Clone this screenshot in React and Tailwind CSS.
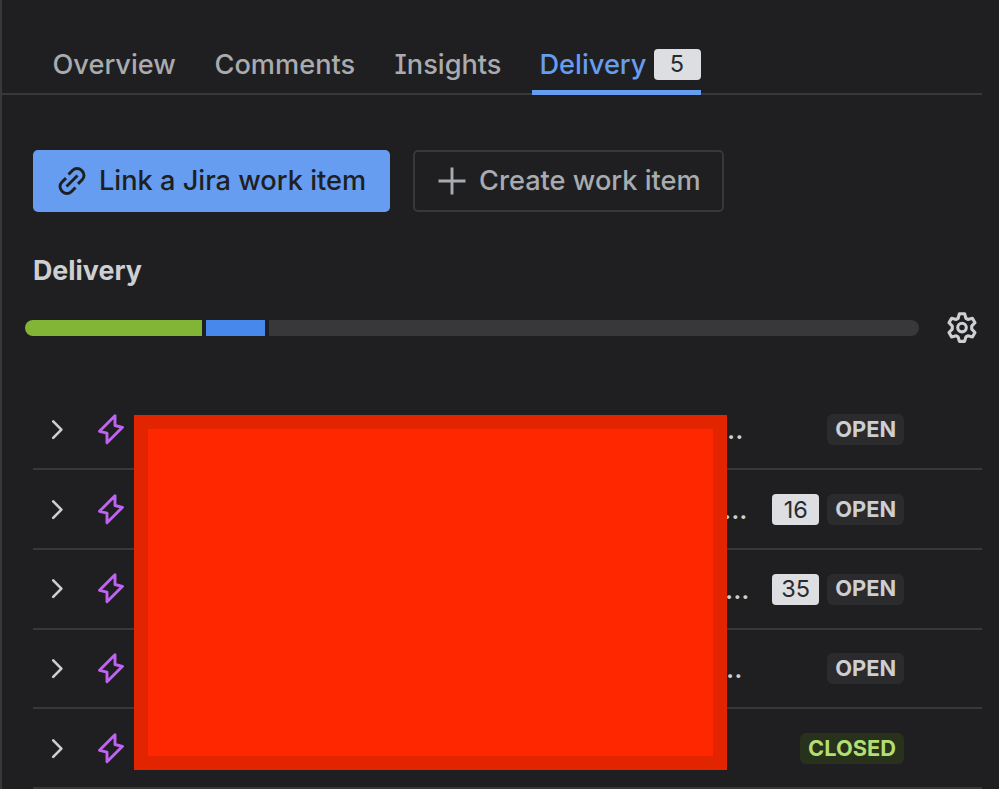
import clsx from "clsx";

const items = [
  { id: 1, dots: "..", dotsPad: "ml-[600px]", status: "OPEN" },
  { id: 2, dots: "...", dotsPad: "ml-[596px]", count: 16, status: "OPEN" },
  { id: 3, dots: "...", dotsPad: "ml-[598px]", count: 35, status: "OPEN" },
  { id: 4, dots: "..", dotsPad: "ml-[599px]", status: "OPEN" },
  { id: 5, dots: "", dotsPad: "ml-[598px]", status: "CLOSED" },
];

function LinkIcon() {
  return (
    <svg className="w-8 h-8 shrink-0" viewBox="0 0 32 32" fill="none" stroke="currentColor" strokeWidth="2.9">
      <path d="M12.5 9.5l4.2-4.2a6.1 6.1 0 0 1 8.7 0l0.8 0.8a6.1 6.1 0 0 1 0 8.6l-4.2 4.2" />
      <path d="M19.5 22.5l-4.2 4.2a6.1 6.1 0 0 1-8.7 0l-0.8-0.8a6.1 6.1 0 0 1 0-8.6l4.2-4.2" />
      <path d="M10.5 21.5L21.5 10.5" />
    </svg>
  );
}

function PlusIcon() {
  return (
    <svg className="w-8 h-8 shrink-0" viewBox="0 0 32 32" fill="none" stroke="currentColor" strokeWidth="2.9">
      <path d="M16 2.5v27M2.5 16h27" />
    </svg>
  );
}

function GearIcon() {
  return (
    <svg className="w-8 h-8 shrink-0" viewBox="0 0 32 32" fill="none" stroke="currentColor" strokeWidth="3.1" strokeLinejoin="round">
      <path d="M13.4 1.8h5.2l1.3 4.5 1.9 1.1 4.6-1.2 2.6 4.5-3.3 3.4v3l3.3 3.4-2.6 4.5-4.6-1.2-1.9 1.1-1.3 4.5h-5.2l-1.3-4.5-1.9-1.1-4.6 1.2-2.6-4.5 3.3-3.4v-3l-3.3-3.4 2.6-4.5 4.6 1.2 1.9-1.1z" />
      <circle cx="16" cy="15.6" r="4.3" />
    </svg>
  );
}

function Chevron() {
  return (
    <svg className="w-4 h-6 shrink-0" viewBox="0 0 16 24" fill="none" stroke="#cecfd2" strokeWidth="2.6" strokeLinecap="round" strokeLinejoin="round">
      <path d="M4.2 3.4l8.2 8.2-8.2 8.2" />
    </svg>
  );
}

function EpicIcon() {
  return (
    <svg className="w-8 h-8 shrink-0" viewBox="0 0 32 32" fill="none" stroke="#bf63f3" strokeWidth="2.9" strokeLinejoin="round">
      <path d="M20 1.8v9.7l7.5 1.8L12 28.8v-9.700L4.5 17.3z" />
    </svg>
  );
}

function Count({ children }) {
  return (
    <span className="w-[47px] h-[31px] rounded-[4px] bg-[#dddee1] text-[#292a2e] text-[23.5px] font-normal flex items-center justify-center">
      {children}
    </span>
  );
}

function Status({ value }) {
  return (
    <span
      className={clsx(
        "h-[31px] px-2 rounded-[6px] text-[21.8px] font-bold flex items-center",
        value === "CLOSED" ? "bg-[#28311b] text-[#b3df72]" : "bg-[#2b2b2d] text-[#cecfd2]"
      )}
    >
      {value}
    </span>
  );
}

export default function App() {
  return (
    <div className="w-[999px] h-[789px] overflow-hidden bg-[#1f1f21] border-l-2 border-[#38383a] pr-[17px] font-['Inter','Liberation_Sans',sans-serif] font-medium text-[27px] leading-none text-[#a9abaf]">
      <div className="h-[95px] pl-[50.5px] pt-[33px] flex border-b-2 border-[#38383a]">
        <div className="h-[62px] flex items-center gap-[39px] text-[27.2px] [font-feature-settings:'cv08']">
          <span className="w-[123px] pt-px">Overview</span>
          <span className="w-[141px] pt-px">Comments</span>
          <span className="w-[99px] pt-px">Insights</span>
          <div className="h-[62px] w-[169px] pl-2 pt-[5px] flex items-center justify-between border-b-[5px] border-[#669df1] text-[#669df1] -ml-px">
            <span className="pt-px">Delivery</span>
            <Count>5</Count>
          </div>
        </div>
      </div>

      <div className="pl-[31px]">
        <div className="pt-[55px] flex gap-[23px] text-[27.2px]">
          <button className="w-[357px] h-[62px] rounded-[5px] bg-[#669df1] text-[#1f1f21] pl-[23px] flex items-center gap-[11px]">
            <LinkIcon />
            <span>Link a Jira work item</span>
          </button>
          <button className="w-[311px] h-[62px] rounded-[5px] border-2 border-[#38383a] pl-[21px] flex items-center gap-[11px]">
            <PlusIcon />
            <span>Create work item</span>
          </button>
        </div>

        <h2 className="mt-[45px] font-bold text-[26.8px] leading-[27px] text-[#cecfd2]">Delivery</h2>

        <div className="mt-[28px] -ml-2 flex items-center">
          <div className="w-[894px] h-4 rounded-full overflow-hidden flex gap-1">
            <div className="w-[177px] bg-[#82b536]" />
            <div className="w-[59px] bg-[#4688ec]" />
            <div className="flex-1 bg-[#38383a]" />
          </div>
          <span className="ml-[27px] text-[#cecfd2]">
            <GearIcon />
          </span>
        </div>

        <div className="relative mt-[46.5px]">
          {items.map((item) => (
            <div key={item.id} className="h-[79.7px] pt-px pl-4 pr-[78px] flex items-center border-b-2 border-[#38383a]">
              <Chevron />
              <span className="ml-[30px]">
                <EpicIcon />
              </span>
              <span className={clsx("text-[#cecfd2]", item.dotsPad)}>{item.dots}</span>
              <div className="ml-auto flex gap-2">
                {item.count && <Count>{item.count}</Count>}
                <Status value={item.status} />
              </div>
            </div>
          ))}
          {/* redaction block over the item titles */}
          <div className="absolute left-[101.4px] top-[24.5px] w-[593px] h-[355px] bg-[#ff2700] border-[14px] border-[#e32400]" />
        </div>
      </div>
    </div>
  );
}
